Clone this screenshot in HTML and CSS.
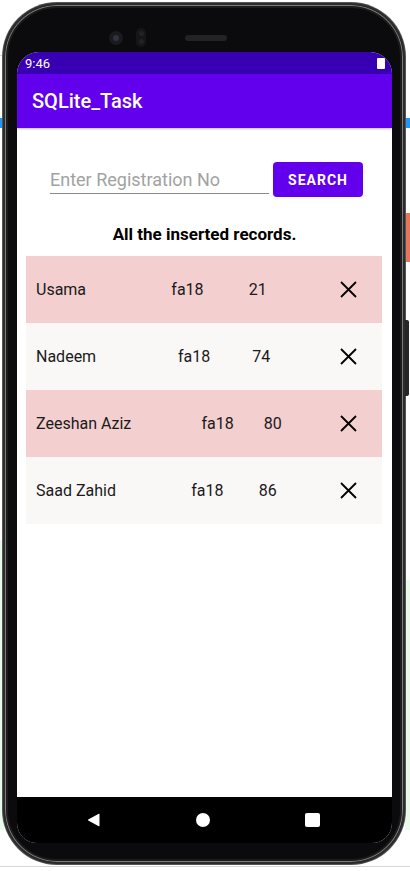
FILE: index.html
```html
<!DOCTYPE html>
<html lang="en">
<head>
<meta charset="utf-8">
<title>SQLite_Task</title>
<link rel="stylesheet" href="styles.css">
</head>
<body>
<div class="device">
  <div class="bezel-top">
    <span class="camera"><span class="lens"></span></span>
    <span class="sensor"><i></i><i></i></span>
    <span class="speaker"></span>
  </div>
  <div class="screen">
    <div class="status-bar">
      <span class="time">9:46</span>
      <span class="battery"></span>
    </div>
    <header class="app-bar">SQLite_Task</header>
    <main class="content">
      <div class="search-row">
        <input class="reg-input" type="text" placeholder="Enter Registration No">
        <button class="search-btn" type="button">SEARCH</button>
      </div>
      <h2 class="heading">All the inserted records.</h2>
      <ul class="records">
        <li class="record pink">
          <span class="cell name">Usama</span>
          <span class="cell reg">fa18</span>
          <span class="cell num">21</span>
          <svg class="del" viewBox="0 0 17 17" width="17" height="17"><path d="M1 1L16 16M16 1L1 16" stroke="#000" stroke-width="1.8" fill="none"/></svg>
        </li>
        <li class="record light">
          <span class="cell name">Nadeem</span>
          <span class="cell reg">fa18</span>
          <span class="cell num">74</span>
          <svg class="del" viewBox="0 0 17 17" width="17" height="17"><path d="M1 1L16 16M16 1L1 16" stroke="#000" stroke-width="1.8" fill="none"/></svg>
        </li>
        <li class="record pink">
          <span class="cell name">Zeeshan Aziz</span>
          <span class="cell reg">fa18</span>
          <span class="cell num">80</span>
          <svg class="del" viewBox="0 0 17 17" width="17" height="17"><path d="M1 1L16 16M16 1L1 16" stroke="#000" stroke-width="1.8" fill="none"/></svg>
        </li>
        <li class="record light">
          <span class="cell name">Saad Zahid</span>
          <span class="cell reg">fa18</span>
          <span class="cell num">86</span>
          <svg class="del" viewBox="0 0 17 17" width="17" height="17"><path d="M1 1L16 16M16 1L1 16" stroke="#000" stroke-width="1.8" fill="none"/></svg>
        </li>
      </ul>
    </main>
    <nav class="nav-bar">
      <svg class="nav-icon" viewBox="0 0 14 14" width="14" height="14"><path d="M12.5 1.2 L12.5 12.8 Q12.5 13.6 11.8 13.2 L1.2 7.6 Q0.4 7 1.2 6.4 L11.8 0.8 Q12.5 0.4 12.5 1.2Z" fill="#fff"/></svg>
      <span class="home"></span>
      <span class="square"></span>
    </nav>
  </div>
</div>
</body>
</html>
```
FILE: styles.css
```css
* { box-sizing: border-box; }

html, body {
  margin: 0;
  padding: 0;
}

body {
  width: 410px;
  height: 871px;
  overflow: hidden;
  font-family: Roboto, "Noto Sans", sans-serif;
  background-color: #ffffff;
  background-image:
    linear-gradient(#2196f3, #2196f3),
    linear-gradient(#2196f3, #2196f3),
    linear-gradient(#e2775a, #e2775a),
    linear-gradient(#e8fbe8, #e8fbe8),
    linear-gradient(#e8fbe8, #e8fbe8),
    linear-gradient(#d6d6d6, #d6d6d6),
    linear-gradient(#d6d6d6, #d6d6d6);
  background-repeat: no-repeat;
  background-size:
    4px 10px,
    5px 10px,
    5px 49px,
    4px 290px,
    5px 250px,
    4px 1px,
    410px 1px;
  background-position:
    0 118px,
    405px 118px,
    405px 213px,
    0 540px,
    405px 580px,
    0 55px,
    0 866px;
}

.device {
  position: relative;
  margin: 3px 0 0 3px;
  width: 402px;
  height: 861px;
  border-radius: 54px;
  background: #0b0b0d;
  border: 2px solid #2c2c2c;
  box-shadow: inset 0 0 0 1px #7c7c7c, inset 0 0 0 3px #1b1b1b, 0 0 0 1px #555;
  padding: 0 11px 19px 12px;
  display: flex;
  flex-direction: column;
}

.device::after {
  content: "";
  position: absolute;
  right: -6px;
  top: 315px;
  width: 4px;
  height: 76px;
  background: #262626;
  border-radius: 0 2px 2px 0;
}

.bezel-top {
  height: 47px;
  flex: none;
  display: flex;
  align-items: center;
  padding-top: 18px;
  align-self: stretch;
}

.camera {
  width: 14px;
  height: 14px;
  border-radius: 50%;
  background: #1b1b1e;
  margin-left: 92px;
  display: flex;
  align-items: center;
  justify-content: center;
}

.lens {
  width: 6px;
  height: 6px;
  border-radius: 50%;
  background: #2c3342;
}

.sensor {
  width: 10px;
  height: 19px;
  border-radius: 5px;
  background: #161618;
  margin-left: 13px;
  display: flex;
  flex-direction: column;
  align-items: center;
  justify-content: space-around;
  padding: 2px 0;
}

.sensor i {
  width: 5px;
  height: 5px;
  border-radius: 50%;
  background: #222226;
}

.speaker {
  width: 42px;
  height: 6px;
  border-radius: 3px;
  background: #232325;
  margin-left: 39px;
}

.screen {
  flex: 1;
  background: #ffffff;
  border-radius: 22px 22px 20px 20px;
  overflow: hidden;
  display: flex;
  flex-direction: column;
}

.status-bar {
  height: 22px;
  flex: none;
  background: #3700b3;
  color: #ffffff;
  display: flex;
  align-items: center;
  justify-content: space-between;
  padding: 0 7px 0 8px;
  font-size: 13px;
}

.battery {
  width: 8px;
  height: 11px;
  background: #ffffff;
  border-radius: 1px;
}

.app-bar {
  height: 54px;
  flex: none;
  background: #6200ee;
  color: #ffffff;
  font-size: 20px;
  font-weight: 500;
  display: flex;
  align-items: center;
  padding-left: 15px;
  box-shadow: 0 1px 2px rgba(0, 0, 0, 0.25);
  position: relative;
}

.content {
  flex: 1;
  display: flex;
  flex-direction: column;
}

.search-row {
  display: flex;
  align-items: flex-start;
  margin-top: 34px;
  padding-left: 33px;
}

.reg-input {
  width: 219px;
  height: 31.5px;
  padding: 7px 0 2px 0;
  margin: 0;
  border: none;
  border-bottom: 1.5px solid #8a8a8a;
  background: transparent;
  font-family: Roboto, sans-serif;
  font-size: 18px;
  color: #222;
  outline: none;
}

.reg-input::placeholder {
  color: #a2a2a2;
}

.search-btn {
  margin-left: 4px;
  width: 90px;
  height: 35px;
  border: none;
  border-radius: 4px;
  background: #6200ee;
  color: #ffffff;
  font-family: Roboto, sans-serif;
  font-size: 14px;
  font-weight: 700;
  letter-spacing: 1px;
  padding: 0;
}

.heading {
  margin: 27px 0 0 0;
  text-align: center;
  font-size: 17px;
  font-weight: 700;
  color: #000;
  line-height: 20px;
}

.records {
  list-style: none;
  margin: 12px 10px 0 9px;
  padding: 0;
}

.record {
  height: 67px;
  display: flex;
  align-items: center;
  padding: 0 25px 0 10px;
  font-size: 16px;
  color: #1a1a1a;
}

.record.pink { background: #f3cfcf; }
.record.light { background: #faf8f7; }

.cell {
  flex: 1 1 auto;
  white-space: nowrap;
}

.cell.name {
  margin-right: 40px;
}

.del {
  flex: none;
  margin-left: 28px;
}

.nav-bar {
  height: 46px;
  flex: none;
  background: #000;
  display: flex;
  align-items: center;
  justify-content: center;
  gap: 95px;
  padding-right: 2px;
}

.nav-icon { display: block; }

.home {
  width: 14px;
  height: 14px;
  border-radius: 50%;
  background: #fff;
}

.square {
  width: 15px;
  height: 14px;
  border-radius: 2px;
  background: #fff;
}
```
